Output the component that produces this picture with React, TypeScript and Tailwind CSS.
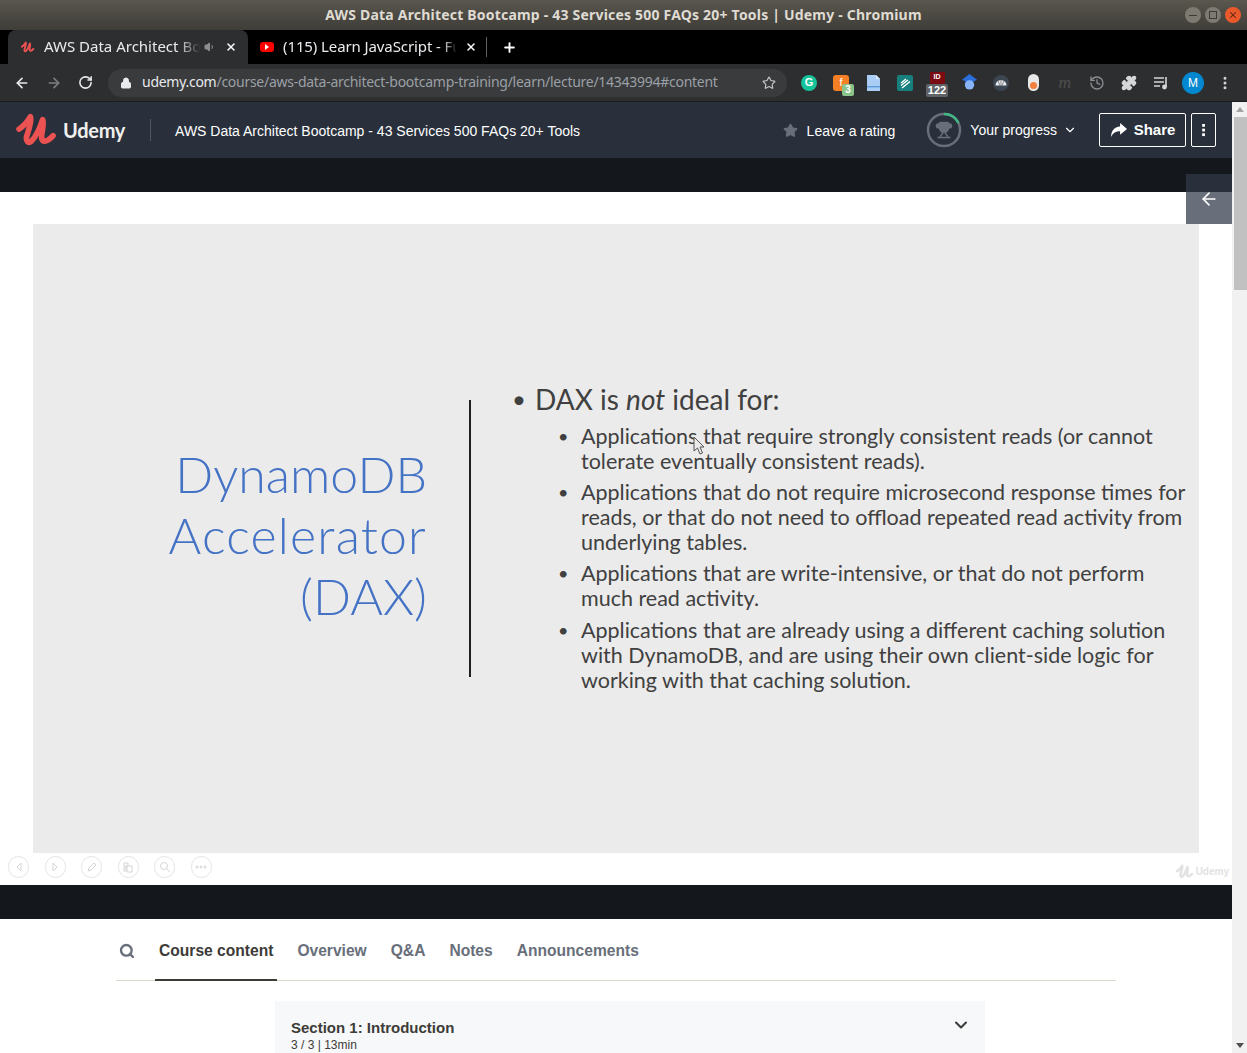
import {
  ArrowLeft,
  ArrowRight,
  ChevronDown,
  Lock,
  MoreVertical,
  Plus,
  RotateCw,
  Search,
  Star,
  Trophy,
  Volume1,
  X,
  Puzzle,
  History,
} from "lucide-react";

function UdemyMark({ className }: { className?: string }) {
  return (
    <svg viewBox="0 0 44 36" className={className} fill="none">
      <path
        d="M3 17 C8 14 12 9 15 4 C17 8 13 18 11 25 C10 30 13 33 16 30 C20 26 25 16 28 7 C30 13 26 22 27 27 C28 31 33 31 39 24"
        stroke="currentColor"
        strokeWidth="6"
        strokeLinecap="round"
        strokeLinejoin="round"
      />
    </svg>
  );
}

function ExtensionIcons() {
  return (
    <div className="flex items-center">
      <div className="flex w-8 justify-center">
        <div className="flex h-4 w-4 items-center justify-center rounded-full bg-[#15c39a] text-[11px] font-bold leading-none text-white">
          G
        </div>
      </div>
      <div className="relative flex w-8 justify-center">
        <div className="flex h-4 w-4 items-center justify-center rounded-[3px] bg-[#f58025] text-[11px] leading-none text-white">
          f
        </div>
        <div className="absolute left-[17px] top-[9px] flex h-[12px] w-[12px] items-center justify-center rounded-[2px] bg-[#8bc48a] text-[10px] font-bold leading-none text-white">
          3
        </div>
      </div>
      <div className="flex w-8 justify-center">
        <svg viewBox="0 0 13 16" className="h-4 w-[13px]">
          <path d="M0 0h9l4 4v12H0z" fill="#a9cdf5" />
          <path d="M9 0l4 4H9z" fill="#d8e8fb" />
          <rect x="0" y="11" width="13" height="1.4" fill="#5f9bdc" />
        </svg>
      </div>
      <div className="flex w-8 justify-center">
        <svg viewBox="0 0 16 16" className="h-4 w-4">
          <rect width="16" height="16" rx="2" fill="#17807e" />
          <path d="M4 8l5-4M4 10.5l7-5.5M5 13l8-6.5" stroke="#fff" strokeWidth="1.4" />
        </svg>
      </div>
      <div className="relative flex w-8 justify-center">
        <div className="mt-[-9px] flex h-[12px] w-[15px] items-start justify-center rounded-[1px] bg-[#7a0c12] text-[7px] font-bold leading-[9px] text-white">
          ID
        </div>
        <div className="absolute left-[5px] top-[3px] flex h-[13px] w-[22px] items-center justify-center rounded-[2px] bg-[#5f6368] text-[11px] font-bold leading-none text-white">
          122
        </div>
      </div>
      <div className="flex w-8 justify-center">
        <svg viewBox="0 0 16 18" className="h-[17px] w-[15px]">
          <path d="M8 0l8 6-8 4-8-4z" fill="#2a6fdb" />
          <circle cx="8" cy="11.5" r="5" fill="#8ab4f8" />
        </svg>
      </div>
      <div className="flex w-8 justify-center">
        <svg viewBox="0 0 16 16" className="h-4 w-4">
          <circle cx="8" cy="8" r="8" fill="#3c4650" />
          <path d="M2.5 10.5a5.5 5.5 0 0 1 11 0z" fill="#e8eaed" />
          <path d="M8 4.8v5.7M5 6l2 4.5M11 6l-2 4.5" stroke="#3c4650" strokeWidth="0.6" />
        </svg>
      </div>
      <div className="flex w-8 justify-center">
        <div className="flex h-[17px] w-[11px] items-end justify-center rounded-full bg-[#e8e8e8] pb-[2px]">
          <div className="h-[7px] w-[7px] rounded-full bg-[#f0803c]" />
        </div>
      </div>
      <div className="flex w-8 justify-center font-serif text-[16px] italic leading-none text-[#4f4f4f]">m</div>
      <div className="flex w-8 justify-center">
        <History className="h-4 w-4 text-[#8a8d91]" strokeWidth={2} />
      </div>
      <div className="flex w-8 justify-center">
        <Puzzle className="h-4 w-4 fill-[#d5d6d8] text-[#d5d6d8]" strokeWidth={2} />
      </div>
      <div className="flex w-8 justify-center">
        <svg viewBox="0 0 16 14" className="h-[14px] w-4" stroke="#d5d6d8" strokeWidth="1.6" fill="none">
          <path d="M1 2h10M1 6h10M1 10h6" />
          <path d="M13 1v10" />
          <circle cx="11.5" cy="11" r="1.6" fill="#d5d6d8" />
        </svg>
      </div>
    </div>
  );
}

function SlideControl({ kind }: { kind: string }) {
  return (
    <div className="flex h-[22px] w-[21px] items-center justify-center rounded-full border border-[#e4e4e4] text-[#d4d4d4]">
      <svg viewBox="0 0 12 12" className="h-3 w-3" fill="none" stroke="currentColor" strokeWidth="1">
        {kind === "prev" && <path d="M8 2L4 6l4 4z" />}
        {kind === "next" && <path d="M4 2l4 4-4 4z" />}
        {kind === "pen" && <path d="M2 10l1-3 5-5 2 2-5 5z" />}
        {kind === "pages" && <path d="M2 2h4v3H2zM2 6h2v4H2zM5 5h5v6H5z" />}
        {kind === "zoom" && <path d="M5 1.5a3.5 3.5 0 1 0 0 7 3.5 3.5 0 0 0 0-7zM7.5 7.5L11 11" />}
        {kind === "more" && <path d="M1 6a1 1 0 1 0 2 0 1 1 0 0 0-2 0zM5 6a1 1 0 1 0 2 0 1 1 0 0 0-2 0zM9 6a1 1 0 1 0 2 0 1 1 0 0 0-2 0z" />}
      </svg>
    </div>
  );
}

const bullets = [
  ["Applications that require strongly consistent reads (or cannot", "tolerate eventually consistent reads)."],
  [
    "Applications that do not require microsecond response times for",
    "reads, or that do not need to offload repeated read activity from",
    "underlying tables.",
  ],
  ["Applications that are write-intensive, or that do not perform", "much read activity."],
  [
    "Applications that are already using a different caching solution",
    "with DynamoDB, and are using their own client-side logic for",
    "working with that caching solution.",
  ],
];

export default function App() {
  return (
    <div className="flex h-[1053px] w-[1247px] flex-col overflow-hidden bg-white font-['Liberation_Sans',sans-serif]">
      {/* window title */}
      <div className="relative flex h-[30px] shrink-0 items-center justify-center bg-gradient-to-b from-[#5a574f] to-[#3f3d38] pb-[2px] font-['Noto_Sans',sans-serif] text-[14px] font-bold tracking-[0.2px] text-[#dfdbd2]">
        AWS Data Architect Bootcamp - 43 Services 500 FAQs 20+ Tools | Udemy - Chromium
        <div className="absolute right-[6px] top-[7px] flex gap-1">
          <div className="flex h-4 w-4 items-center justify-center rounded-full bg-[#7d7a72]">
            <div className="h-[1px] w-2 bg-[#3c3b37]" />
          </div>
          <div className="flex h-4 w-4 items-center justify-center rounded-full bg-[#7d7a72]">
            <div className="h-2 w-2 border border-[#3c3b37]" />
          </div>
          <div className="flex h-4 w-4 items-center justify-center rounded-full bg-[#e9592b]">
            <X className="h-[10px] w-[10px] text-[#5a2412]" strokeWidth={2.5} />
          </div>
        </div>
      </div>

      {/* tab strip */}
      <div className="flex h-[34px] shrink-0 items-stretch bg-black pl-2 font-['Noto_Sans',sans-serif] text-[15px] text-[#e8eaed]">
        <div className="flex w-[240px] shrink-0 items-center rounded-t-lg bg-[#2d2e30] pl-[13px]">
          <UdemyMark className="h-[12px] w-[14px] text-[#ec5252]" />
          <span className="ml-[9px] mb-[2px] w-[156px] whitespace-nowrap [mask-image:linear-gradient(to_right,black_86%,transparent)]">
            AWS Data Architect Bo
          </span>
          <Volume1 className="ml-[4px] h-[12px] w-[12px] fill-[#8a8d91] text-[#8a8d91]" />
          <X className="ml-[9px] h-[12px] w-[12px] text-white" strokeWidth={3} />
        </div>
        <div className="flex flex-1 items-center pl-3">
          <div className="flex h-[10px] w-[14px] items-center justify-center rounded-[3px] bg-[#ff0000]">
            <div className="h-0 w-0 border-y-[3px] border-l-[4px] border-y-transparent border-l-white" />
          </div>
          <span className="ml-[9px] mb-[2px] w-[174px] whitespace-nowrap tracking-[-0.1px] [mask-image:linear-gradient(to_right,black_92%,transparent)]">
            (115) Learn JavaScript - Fu
          </span>
          <X className="ml-2 h-[12px] w-[12px] text-white" strokeWidth={3} />
          <div className="ml-[9px] h-5 w-px bg-[#5f6368]" />
          <Plus className="ml-[15px] h-[15px] w-[15px] text-white" strokeWidth={3} />
        </div>
      </div>

      {/* toolbar */}
      <div className="flex h-[38px] shrink-0 items-center border-b border-[#1c1c1c] bg-[#2d2e30]">
        <ArrowLeft className="ml-[14px] h-4 w-4 text-[#e8eaed]" strokeWidth={2.5} />
        <ArrowRight className="ml-4 h-4 w-4 text-[#7c7f83]" strokeWidth={2.5} />
        <RotateCw className="ml-4 h-[15px] w-[15px] text-[#e8eaed]" strokeWidth={2.5} />
        <div className="ml-[15px] flex h-7 w-[679px] items-center rounded-full bg-[#3a3b3d] pl-[12px] pr-[11px] font-['Noto_Sans',sans-serif] text-sm">
          <Lock className="h-3 w-3 fill-[#e8eaed] text-[#e8eaed]" strokeWidth={2} />
          <span className="mb-[2px] ml-[10px] flex-1 whitespace-nowrap tracking-[-0.27px] text-[#9aa0a6]">
            <span className="text-[#e8eaed]">udemy.com</span>/course/aws-data-architect-bootcamp-training/learn/lecture/14343994#content
          </span>
          <Star className="h-[14px] w-[14px] text-[#c4c7c5]" strokeWidth={2} />
        </div>
        <div className="ml-[6px]">
          <ExtensionIcons />
        </div>
        <div className="ml-[5px] flex h-[22px] w-[22px] items-center justify-center rounded-full bg-[#0288d1] text-xs text-white">
          M
        </div>
        <MoreVertical className="ml-[13px] h-4 w-4 text-[#d5d6d8]" strokeWidth={2.5} />
      </div>

      <div className="flex min-h-0 flex-1">
        {/* page */}
        <div className="relative w-[1232px] shrink-0 overflow-hidden">
          <header className="flex h-[56px] items-center bg-[#29303b] pl-4 pr-4 text-white">
            <UdemyMark className="h-[34px] w-[42px] text-[#ec5252]" />
            <span className="ml-[5px] font-['Lato',sans-serif] text-[20px] font-bold tracking-[-0.3px] text-[#f0efed]">Udemy</span>
            <div className="ml-[25px] h-[22px] w-px bg-[#4f5660]" />
            <span className="ml-6 mt-[2px] text-sm">AWS Data Architect Bootcamp - 43 Services 500 FAQs 20+ Tools</span>
            <div className="ml-auto flex items-center">
              <Star className="h-[15px] w-[15px] fill-[#686f7a] text-[#686f7a]" />
              <span className="ml-[9px] mt-[2px] text-sm">Leave a rating</span>
              <div className="relative ml-[31px] flex h-9 w-9 items-center justify-center">
                <svg viewBox="0 0 36 36" className="absolute inset-0" fill="none">
                  <circle cx="18" cy="18" r="16" stroke="#686f7a" strokeWidth="2.5" />
                  <path d="M18 2a16 16 0 0 1 14.5 9" stroke="#41b883" strokeWidth="2.5" />
                </svg>
                <Trophy className="h-[18px] w-[18px] fill-[#686f7a] text-[#686f7a]" />
              </div>
              <span className="ml-2 text-sm">Your progress</span>
              <ChevronDown className="ml-[6px] h-[14px] w-[14px]" strokeWidth={2} />
              <div className="ml-[22px] flex h-[34px] w-[87px] items-center justify-center gap-[7px] rounded-[2px] border border-white text-[15px] font-bold">
                <svg viewBox="0 0 16 14" className="h-[15px] w-[17px]" fill="currentColor">
                  <path d="M9.5 0L16 5.5 9.5 11V7.6C5.5 7.6 3 8.8 1 13c0-5.5 2.8-9.4 8.5-9.8z" />
                </svg>
                Share
              </div>
              <div className="ml-[5px] flex h-[34px] w-[25px] items-center justify-center rounded-[2px] border border-white">
                <svg viewBox="0 0 4 14" className="h-[13px] w-1" fill="currentColor">
                  <rect width="3" height="3" />
                  <rect y="5" width="3" height="3" />
                  <rect y="10" width="3" height="3" />
                </svg>
              </div>
            </div>
          </header>

          <div className="h-[34px] bg-[#14171c]" />

          {/* lecture */}
          <div className="relative h-[693px] bg-white">
            <div className="h-8" />
            <div className="ml-[33px] flex h-[629px] w-[1166px] bg-[#ebebeb] font-['Lato',sans-serif]">
              <div className="flex w-[394px] shrink-0 flex-col items-end pt-[220px] text-[50px] font-light leading-[61px] text-[#4472c4]">
                <span>DynamoDB</span>
                <span className="tracking-[1.2px]">Accelerator</span>
                <span>(DAX)</span>
              </div>
              <div className="ml-[42px] mt-[176px] h-[277px] w-[2px] shrink-0 bg-[#1f1f1f]" />
              <div className="ml-[41px] pt-[158px] text-[#404040]">
                <div className="flex items-center text-[28px] leading-[34px]">
                  <span className="w-[23px] text-[24px]">•</span>
                  <span>
                    DAX is <em>not</em> ideal for:
                  </span>
                </div>
                <div className="ml-[69px] mt-[8px] flex flex-col gap-[6px] text-[21.5px] leading-[25px]">
                  {bullets.map((lines) => (
                    <div key={lines[0]} className="relative whitespace-nowrap last:mt-px">
                      <span className="absolute -left-[23px] top-0 text-[18px]">•</span>
                      {lines.map((line) => (
                        <div key={line}>{line}</div>
                      ))}
                    </div>
                  ))}
                </div>
              </div>
            </div>
            {/* mouse pointer captured in the video */}
            <svg viewBox="0 0 12 19" className="absolute left-[693px] top-[244px] h-[19px] w-3" fill="#ebebeb" stroke="#555" strokeWidth="1">
              <path d="M1 1v14l3.5-3 2.5 6 2.5-1-2.5-6H11z" />
            </svg>
            <div className="flex h-8 items-center justify-between pb-1 pl-2 pr-[3px]">
              <div className="flex gap-[15.6px]">
                <SlideControl kind="prev" />
                <SlideControl kind="next" />
                <SlideControl kind="pen" />
                <SlideControl kind="pages" />
                <SlideControl kind="zoom" />
                <SlideControl kind="more" />
              </div>
              <div className="mt-2 flex items-center gap-[2px] text-[10px] font-bold text-[#e2e2e2]">
                <UdemyMark className="h-[15px] w-[18px]" />
                Udemy
              </div>
            </div>
          </div>

          <div className="h-[34px] bg-[#14171c]" />

          {/* course tabs */}
          <div className="mx-[116px] flex h-[62px] items-stretch border-b border-[#dcdacb] pt-[2px] text-[15.6px] font-bold text-[#686f7a]">
            <div className="flex w-[39px] items-center pl-[3px]">
              <Search className="h-4 w-4 text-[#686f7a]" strokeWidth={3.5} />
            </div>
            <div className="-mb-px flex items-center border-b-2 border-[#3c3b37] px-1 pt-[2px] text-[#3c3b37]">Course content</div>
            <div className="ml-5 flex items-center">Overview</div>
            <div className="ml-6 flex items-center">Q&amp;A</div>
            <div className="ml-6 flex items-center">Notes</div>
            <div className="ml-6 flex items-center">Announcements</div>
          </div>

          <div className="mx-[275px] mt-5 h-[60px] w-[710px] bg-[#f7f8fa] pl-4 pr-[14px] pt-[18px]">
            <div className="flex items-start justify-between">
              <div>
                <div className="text-[15px] font-bold leading-[18px] text-[#3c3b37]">Section 1: Introduction</div>
                <div className="text-xs leading-[16px] text-[#3c3b37]">3 / 3 | 13min</div>
              </div>
              <ChevronDown className="-mt-[4px] h-5 w-5 text-[#3c3b37]" strokeWidth={2.5} />
            </div>
          </div>

          {/* slide-panel toggle */}
          <div className="absolute left-[1186px] top-[72px] flex h-[50px] w-[46px] flex-col">
            <div className="flex h-full items-center justify-center bg-gradient-to-b from-[#29303b] from-36% to-[#686f7a] to-36%">
              <ArrowLeft className="h-5 w-5 text-white" strokeWidth={2} />
            </div>
          </div>
        </div>

        {/* scrollbar */}
        <div className="flex w-[15px] shrink-0 flex-col items-center bg-[#f1f1f1]">
          <div className="mt-[5px] h-0 w-0 border-x-[4px] border-b-[5px] border-x-transparent border-b-[#a3a3a3]" />
          <div className="mt-[5px] h-[173px] w-[13px] self-end bg-[#c1c1c1]" />
          <div className="mb-[5px] mt-auto h-0 w-0 border-x-[4px] border-t-[5px] border-x-transparent border-t-[#505050]" />
        </div>
      </div>
    </div>
  );
}
